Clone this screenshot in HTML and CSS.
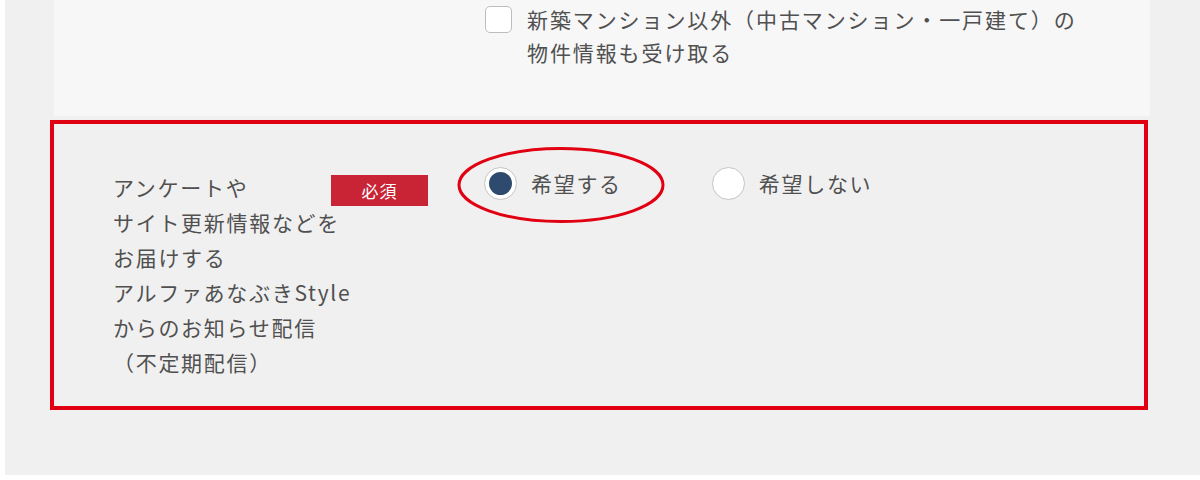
FILE: index.html
```html
<!DOCTYPE html>
<html lang="ja">
<head>
<meta charset="utf-8">
<link rel="stylesheet" href="styles.css">
</head>
<body>
<div class="frame">
  <div class="panel">
    <label class="check">
      <span class="box"></span>
      <span class="check-text">新築マンション以外（中古マンション・一戸建て）の<br>物件情報も受け取る</span>
    </label>
  </div>
  <div class="row">
    <div class="label">アンケートや<br>サイト更新情報などを<br>お届けする<br>アルファあなぶきStyle<br>からのお知らせ配信<br>（不定期配信）</div>
    <div class="badge">必須</div>
    <div class="options">
      <div class="option">
        <span class="radio radio-on"><span class="dot"></span></span>
        <span class="opt-text">希望する</span>
      </div>
      <div class="option">
        <span class="radio"></span>
        <span class="opt-text">希望しない</span>
      </div>
      <svg class="circle-mark" width="210" height="80" viewBox="0 0 210 80">
        <ellipse cx="105" cy="40" rx="102" ry="36.5" fill="none" stroke="#e10012" stroke-width="3"/>
      </svg>
    </div>
  </div>
</div>
</body>
</html>
```
FILE: styles.css
```css
html, body {
  margin: 0;
  padding: 0;
  background: #ffffff;
}
body {
  width: 1200px;
  height: 480px;
  overflow: hidden;
  font-family: "Noto Sans CJK JP", "Noto Sans", sans-serif;
  color: #505050;
}
.frame {
  margin-left: 5px;
  width: 1195px;
  height: 475px;
  background: #f0f0f0;
  padding-left: 49px;
  box-sizing: border-box;
}
.panel {
  width: 1096px;
  height: 116px;
  background: #f7f7f7;
  padding: 3px 0 0 431px;
  box-sizing: border-box;
}
.check {
  display: flex;
  align-items: flex-start;
}
.box {
  width: 27px;
  height: 27px;
  box-sizing: border-box;
  border: 1.5px solid #bdbdbd;
  border-radius: 5px;
  background: #ffffff;
  margin-top: 3px;
  flex: none;
}
.check-text {
  margin-left: 15px;
  font-size: 21px;
  letter-spacing: 1.9px;
  line-height: 33px;
}
.row {
  margin: 4px 0 0 -4px;
  width: 1098px;
  height: 290px;
  box-sizing: border-box;
  border: 4px solid #e10012;
  display: flex;
  align-items: flex-start;
  padding: 46px 0 0 59px;
}
.label {
  width: 218px;
  white-space: nowrap;
  font-size: 21px;
  letter-spacing: 1.7px;
  line-height: 35px;
  flex: none;
}
.badge {
  width: 97px;
  height: 31px;
  margin-top: 5px;
  background: #c92336;
  color: #ffffff;
  font-size: 17px;
  line-height: 31px;
  text-align: center;
  letter-spacing: 1px;
  flex: none;
}
.options {
  position: relative;
  display: flex;
  align-items: center;
  gap: 90px;
  margin-left: 56px;
  margin-top: -4px;
}
.option {
  display: flex;
  align-items: center;
  gap: 14px;
}
.radio {
  width: 33px;
  height: 33px;
  box-sizing: border-box;
  border: 1.5px solid #c4c4c4;
  border-radius: 50%;
  background: #ffffff;
  display: flex;
  align-items: center;
  justify-content: center;
}
.dot {
  width: 23px;
  height: 23px;
  border-radius: 50%;
  background: #2e4a6e;
}
.opt-text {
  font-size: 21px;
  letter-spacing: 1.7px;
  line-height: 34px;
}
.circle-mark {
  position: absolute;
  left: -28px;
  top: -21px;
}
```
